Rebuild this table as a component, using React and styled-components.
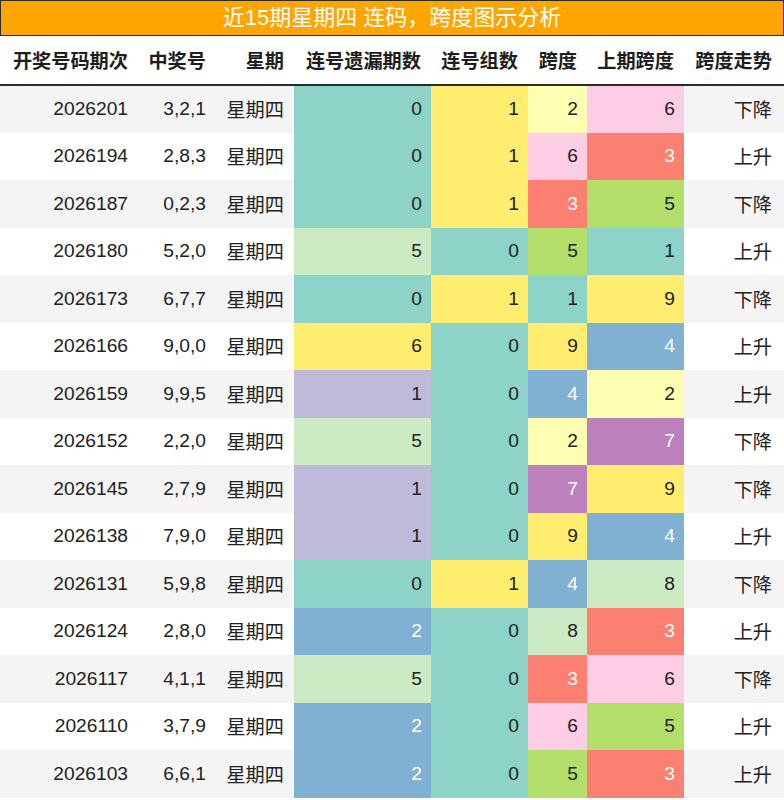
import React from 'react'
import styled, { createGlobalStyle } from 'styled-components'

const GlobalStyle = createGlobalStyle`
  html, body {
    margin: 0;
    padding: 0;
    background: #fff;
  }
  body {
    font-family: 'Liberation Sans', 'Noto Sans CJK SC', sans-serif;
    color: #222;
  }
`

const TEAL = '#8dd3c7'
const LAVENDER = '#bebada'
const BLUE = '#80b1d3'
const LIGHTGREEN = '#ccebc5'
const YELLOW = '#ffed6f'
const LIGHTYELLOW = '#ffffb3'
const SALMON = '#fb8072'
const GREEN = '#b3de69'
const PINK = '#fccde5'
const PURPLE = '#bc80bd'

const missColors = { 0: TEAL, 1: LAVENDER, 2: BLUE, 5: LIGHTGREEN, 6: YELLOW }
const groupColors = { 0: TEAL, 1: YELLOW }
const spanColors = {
  1: TEAL,
  2: LIGHTYELLOW,
  3: SALMON,
  4: BLUE,
  5: GREEN,
  6: PINK,
  7: PURPLE,
  8: LIGHTGREEN,
  9: YELLOW
}
const darkBg = [SALMON, BLUE, PURPLE]

const rows = [
  ['2026201', '3,2,1', 0, 1, 2, 6, '下降'],
  ['2026194', '2,8,3', 0, 1, 6, 3, '上升'],
  ['2026187', '0,2,3', 0, 1, 3, 5, '下降'],
  ['2026180', '5,2,0', 5, 0, 5, 1, '上升'],
  ['2026173', '6,7,7', 0, 1, 1, 9, '下降'],
  ['2026166', '9,0,0', 6, 0, 9, 4, '上升'],
  ['2026159', '9,9,5', 1, 0, 4, 2, '上升'],
  ['2026152', '2,2,0', 5, 0, 2, 7, '下降'],
  ['2026145', '2,7,9', 1, 0, 7, 9, '下降'],
  ['2026138', '7,9,0', 1, 0, 9, 4, '上升'],
  ['2026131', '5,9,8', 0, 1, 4, 8, '下降'],
  ['2026124', '2,8,0', 2, 0, 8, 3, '上升'],
  ['2026117', '4,1,1', 5, 0, 3, 6, '下降'],
  ['2026110', '3,7,9', 2, 0, 6, 5, '上升'],
  ['2026103', '6,6,1', 2, 0, 5, 3, '上升']
]

const headers = ['开奖号码期次', '中奖号', '星期', '连号遗漏期数', '连号组数', '跨度', '上期跨度', '跨度走势']
const widths = [138, 78, 78, 137, 97, 59, 97, 100]

const App = () => {
  return (
    <Page>
      <GlobalStyle />
      <TitleBar>近15期星期四 连码，跨度图示分析</TitleBar>
      <Table>
        <colgroup>
          {widths.map((w, i) => (
            <col key={i} style={{ width: w }} />
          ))}
        </colgroup>
        <thead>
          <tr>
            {headers.map((h, i) => (
              <Th key={h} $last={i === headers.length - 1}>
                {h}
              </Th>
            ))}
          </tr>
        </thead>
        <tbody>
          {rows.map(([issue, nums, miss, group, span, prev, trend], i) => (
            <Row key={issue} $odd={i % 2 === 0}>
              <Td>{issue}</Td>
              <Td>{nums}</Td>
              <Td>星期四</Td>
              <ColorTd bg={missColors[miss]}>{miss}</ColorTd>
              <ColorTd bg={groupColors[group]}>{group}</ColorTd>
              <ColorTd bg={spanColors[span]}>{span}</ColorTd>
              <ColorTd bg={spanColors[prev]}>{prev}</ColorTd>
              <Td $last>{trend}</Td>
            </Row>
          ))}
        </tbody>
      </Table>
    </Page>
  )
}

const ColorTd = ({ bg, children }) => (
  <Cell $bg={bg} $light={darkBg.includes(bg)}>
    {children}
  </Cell>
)

export default App

const Page = styled.div`
  width: 784px;
  overflow: hidden;
`
const TitleBar = styled.div`
  box-sizing: border-box;
  height: 36px;
  background: #ffa500;
  border: 1px solid #2b2b2b;
  color: #fff;
  font-size: 22px;
  line-height: 33px;
  text-align: center;
`
const Table = styled.table`
  width: 784px;
  border-collapse: collapse;
  table-layout: fixed;
  font-size: 19.2px;
`
const Th = styled.th`
  height: 48px;
  padding: 0 ${p => (p.$last ? 12 : 10)}px 0 0;
  text-align: right;
  font-weight: bold;
  color: #1e1e1e;
  white-space: nowrap;
  border-bottom: 2px solid #2b2b2b;
  vertical-align: middle;
`
const Row = styled.tr`
  height: 47.5px;
  background: ${p => (p.$odd ? '#f4f4f4' : '#fff')};
`
const Td = styled.td`
  padding: 0 ${p => (p.$last ? 12 : 10)}px 0 0;
  text-align: right;
  white-space: nowrap;
  vertical-align: middle;
`
const Cell = styled(Td)`
  padding-right: 9px;
  background: ${p => p.$bg};
  color: ${p => (p.$light ? '#fff' : '#222')};
`
